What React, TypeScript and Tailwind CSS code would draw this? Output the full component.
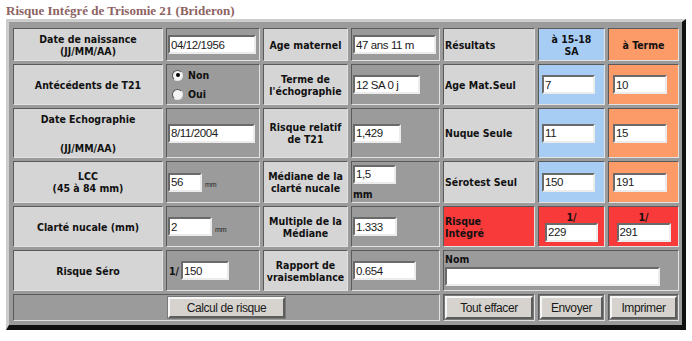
import React from 'react';

const lbl = "font-['DejaVu_Sans_Condensed','DejaVu_Sans',sans-serif] [font-stretch:condensed] font-bold text-[10.5px] leading-[12px] text-[#111]";
const inp = "font-['Liberation_Sans_Narrow','Arial_Narrow','Liberation_Sans',sans-serif] font-normal text-[11.5px] tracking-[-0.4px]";
const edge = "border border-t-[#5a5a5a] border-l-[#5a5a5a] border-b-[#e2e2e2] border-r-[#e2e2e2] p-px";

const tones = {
  label: 'bg-[#d5d5d5]',
  field: 'bg-[#9b9b9b]',
  blue: 'bg-[#a7cdf5]',
  orange: 'bg-[#fc9a68]',
  red: 'bg-[#f83a3a]',
};

type Tone = keyof typeof tones;

const Cell: React.FC<{ tone?: Tone; className?: string; children?: React.ReactNode }> = ({ tone = 'label', className = '', children }) => (
  <div className={`${edge} ${tones[tone]} ${className}`}>{children}</div>
);

const Label: React.FC<{ children: React.ReactNode; left?: boolean }> = ({ children, left }) => (
  <Cell className={`flex items-center ${left ? 'justify-start' : 'justify-center text-center'} ${lbl}`}>
    <div>{children}</div>
  </Cell>
);

const Field: React.FC<{ value: string; w: string }> = ({ value, w }) => (
  <input
    readOnly
    value={value}
    className={`${w} h-[19px] bg-white border-2 border-t-[#6a6a6a] border-l-[#6a6a6a] border-b-[#ececec] border-r-[#ececec] pl-px text-[#1a1a1a] outline-none ${inp}`}
  />
);

const Radio: React.FC<{ on?: boolean }> = ({ on }) => (
  <span className="flex items-center justify-center w-[11px] h-[11px] rounded-full bg-[#f4f4f4] border border-t-[#555] border-l-[#555] border-b-[#e8e8e8] border-r-[#e8e8e8]">
    {on && <span className="w-[4px] h-[4px] rounded-full bg-black" />}
  </span>
);

const Btn: React.FC<{ children: React.ReactNode; className?: string }> = ({ children, className = '' }) => (
  <button className={`bg-[#d6d3ce] border-2 border-t-[#f6f6f6] border-l-[#f6f6f6] border-b-[#5c5c5c] border-r-[#5c5c5c] outline outline-1 outline-[#7a7a7a] text-[#1a1a1a] ${inp} text-[12px] ${className}`}>
    {children}
  </button>
);

const Mm: React.FC = () => (
  <span className="ml-[3px] self-end mb-[1px] font-['Liberation_Sans',sans-serif] font-normal text-[7px] text-[#222]">mm</span>
);

export default function App() {
  return (
    <div className="w-[692px] h-[341px] bg-white">
      <div className="h-[19px] pl-[6px] pt-[4px] leading-[14px] font-['Liberation_Serif',serif] font-bold text-[13px] text-[#8d6262]">
        Risque Intégré de Trisomie 21 (Brideron)
      </div>
      <div className="ml-[6px] w-[680px] bg-[#9b9b9b] border-t-[3px] border-l-[3px] border-r-[4px] border-b-[5px] border-t-[#cdcdcd] border-l-[#cdcdcd] border-r-[#111] border-b-[#111] pt-[6px] pl-[4px] pr-[3px] pb-[4px]">
        <div className="grid grid-cols-[150px_94px_85px_89px_92px_67px_71px] grid-rows-[33px_41px_50px_42px_41px_41px_27px] gap-[3px]">
          {/* row 1 */}
          <Label>Date de naissance<br />(JJ/MM/AA)</Label>
          <Cell tone="field" className="flex items-center"><Field value="04/12/1956" w="w-[88px]" /></Cell>
          <Label>Age maternel</Label>
          <Cell tone="field" className="flex items-center"><Field value="47 ans 11 m" w="w-[83px]" /></Cell>
          <Label left>Résultats</Label>
          <Cell tone="blue" className={`flex items-center justify-center text-center ${lbl} leading-[11px] text-[#0c1a4a]`}>
            <div>à 15-18<br />SA</div>
          </Cell>
          <Cell tone="orange" className={`flex items-center justify-center ${lbl} text-[#4a140a]`}>à Terme</Cell>

          {/* row 2 */}
          <Label>Antécédents de T21</Label>
          <Cell tone="field" className={`flex flex-col justify-center gap-[7px] pl-[5px] ${lbl}`}>
            <div className="flex items-center gap-[5px]"><Radio on />Non</div>
            <div className="flex items-center gap-[5px]"><Radio />Oui</div>
          </Cell>
          <Label>Terme de<br />l'échographie</Label>
          <Cell tone="field" className="flex items-center"><Field value="12 SA 0 j" w="w-[67px]" /></Cell>
          <Label left>Age Mat.Seul</Label>
          <Cell tone="blue" className="flex items-center pl-[3px]"><Field value="7" w="w-[53px]" /></Cell>
          <Cell tone="orange" className="flex items-center pl-[4px]"><Field value="10" w="w-[54px]" /></Cell>

          {/* row 3 */}
          <Cell className={`flex flex-col items-center justify-between pt-[4px] pb-[3px] ${lbl}`}>
            <div>Date Echographie</div>
            <div>(JJ/MM/AA)</div>
          </Cell>
          <Cell tone="field" className="flex items-center"><Field value="8/11/2004" w="w-[87px]" /></Cell>
          <Label>Risque relatif<br />de T21</Label>
          <Cell tone="field" className="flex items-center"><Field value="1,429" w="w-[48px]" /></Cell>
          <Label left>Nuque Seule</Label>
          <Cell tone="blue" className="flex items-center pl-[3px]"><Field value="11" w="w-[53px]" /></Cell>
          <Cell tone="orange" className="flex items-center pl-[4px]"><Field value="15" w="w-[54px]" /></Cell>

          {/* row 4 */}
          <Label>LCC<br />(45 à 84 mm)</Label>
          <Cell tone="field" className="flex items-center">
            <div className="flex"><Field value="56" w="w-[34px]" /><Mm /></div>
          </Cell>
          <Label>Médiane de la<br />clarté nucale</Label>
          <Cell tone="field" className={`flex flex-col justify-center ${lbl}`}>
            <Field value="1,5" w="w-[43px]" />
            <div className="mt-[4px]">mm</div>
          </Cell>
          <Label left>Sérotest Seul</Label>
          <Cell tone="blue" className="flex items-center pl-[3px]"><Field value="150" w="w-[53px]" /></Cell>
          <Cell tone="orange" className="flex items-center pl-[4px]"><Field value="191" w="w-[54px]" /></Cell>

          {/* row 5 */}
          <Label>Clarté nucale (mm)</Label>
          <Cell tone="field" className="flex items-center">
            <div className="flex"><Field value="2" w="w-[44px]" /><Mm /></div>
          </Cell>
          <Label>Multiple de la<br />Médiane</Label>
          <Cell tone="field" className="flex items-center"><Field value="1.333" w="w-[44px]" /></Cell>
          <Cell tone="red" className={`flex items-center ${lbl} text-[#5a0808]`}>
            <div>Risque<br />Intégré</div>
          </Cell>
          <Cell tone="red" className={`flex flex-col items-center justify-center ${lbl} text-[#3a0404]`}>
            <div className="leading-[11px]">1/</div>
            <Field value="229" w="w-[53px]" />
          </Cell>
          <Cell tone="red" className={`flex flex-col items-center justify-center ${lbl} text-[#3a0404]`}>
            <div className="leading-[11px]">1/</div>
            <Field value="291" w="w-[54px]" />
          </Cell>

          {/* row 6 */}
          <Label>Risque Séro</Label>
          <Cell tone="field" className={`flex items-center gap-[2px] ${lbl}`}>
            <span className="pl-px">1/</span>
            <Field value="150" w="w-[48px]" />
          </Cell>
          <Label>Rapport de<br />vraisemblance</Label>
          <Cell tone="field" className="flex items-center"><Field value="0.654" w="w-[63px]" /></Cell>
          <Cell tone="field" className={`col-span-3 flex flex-col ${lbl}`}>
            <div className="pt-[1px] pb-[2px]">Nom</div>
            <Field value="" w="w-[215px]" />
          </Cell>

          {/* row 7 */}
          <Cell tone="field" className="col-span-4 flex items-center justify-center">
            <Btn className="w-[117px] h-[21px]">Calcul de risque</Btn>
          </Cell>
          <Cell tone="field" className="flex"><Btn className="w-full h-full">Tout effacer</Btn></Cell>
          <Cell tone="field" className="flex"><Btn className="w-full h-full">Envoyer</Btn></Cell>
          <Cell tone="field" className="flex"><Btn className="w-full h-full">Imprimer</Btn></Cell>
        </div>
      </div>
    </div>
  );
}
